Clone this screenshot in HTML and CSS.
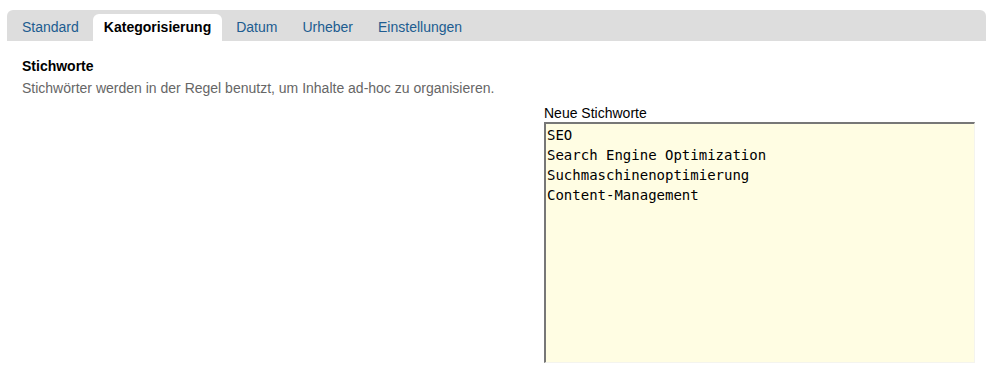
FILE: index.html
```html
<!DOCTYPE html>
<html lang="de">

<head>
  <meta charset="UTF-8">
  <title>Kategorisierung</title>
  <link rel="stylesheet" href="styles.css">
</head>

<body>
  <div class="edit-form">
    <ul class="tabs">
      <li class="tab"><a href="#">Standard</a></li>
      <li class="tab active"><a href="#">Kategorisierung</a></li>
      <li class="tab"><a href="#">Datum</a></li>
      <li class="tab"><a href="#">Urheber</a></li>
      <li class="tab"><a href="#">Einstellungen</a></li>
    </ul>
    <div class="field">
      <label class="field-title">Stichworte</label>
      <div class="field-help">Stichwörter werden in der Regel benutzt, um Inhalte ad-hoc zu organisieren.</div>
      <div class="keywords">
        <label for="new-keywords">Neue Stichworte</label>
        <textarea id="new-keywords">SEO
Search Engine Optimization
Suchmaschinenoptimierung
Content-Management</textarea>
      </div>
    </div>
  </div>
</body>

</html>
```

FILE: styles.css
```css
body {
  font-family: "Liberation Sans", Arial, sans-serif;
  margin: 0;
  padding: 0;
  background-color: white;
  color: black;
}

.edit-form {
  padding: 10px 7px 0 7px;
}

.tabs {
  list-style-type: none;
  margin: 0;
  padding: 4px 0 0 4px;
  height: 27px;
  background-color: #dddddd;
  border-radius: 6px 6px 0 0;
  display: flex;
}

.tab {
  margin-right: 3px;
  border-radius: 6px 6px 0 0;
}

.tab a {
  display: block;
  padding: 0 11px;
  line-height: 26px;
  font-size: 14px;
  color: #205c90;
  text-decoration: none;
}

.tab.active {
  background-color: white;
}

.tab.active a {
  color: black;
  font-weight: bold;
}

.field {
  padding: 17px 15px 0 15px;
}

.field-title {
  display: block;
  font-size: 14px;
  font-weight: bold;
  line-height: 16px;
}

.field-help {
  font-size: 14px;
  color: #666666;
  line-height: 16px;
  margin-top: 6px;
}

.keywords {
  margin-left: 522px;
  margin-top: 9px;
  display: flex;
  flex-direction: column;
}

.keywords label {
  font-size: 14px;
  line-height: 16px;
}

.keywords textarea {
  width: 431px;
  height: 241px;
  box-sizing: border-box;
  margin: 1px 0 0 0;
  padding: 1px 1px;
  background-color: #fffde3;
  border-style: solid;
  border-width: 2px 1px 1px 2px;
  border-color: #777777 #f4f4ee #f4f4ee #777777;
  font-family: "DejaVu Sans Mono", monospace;
  font-size: 14px;
  line-height: 20px;
  color: black;
  resize: none;
}
```
